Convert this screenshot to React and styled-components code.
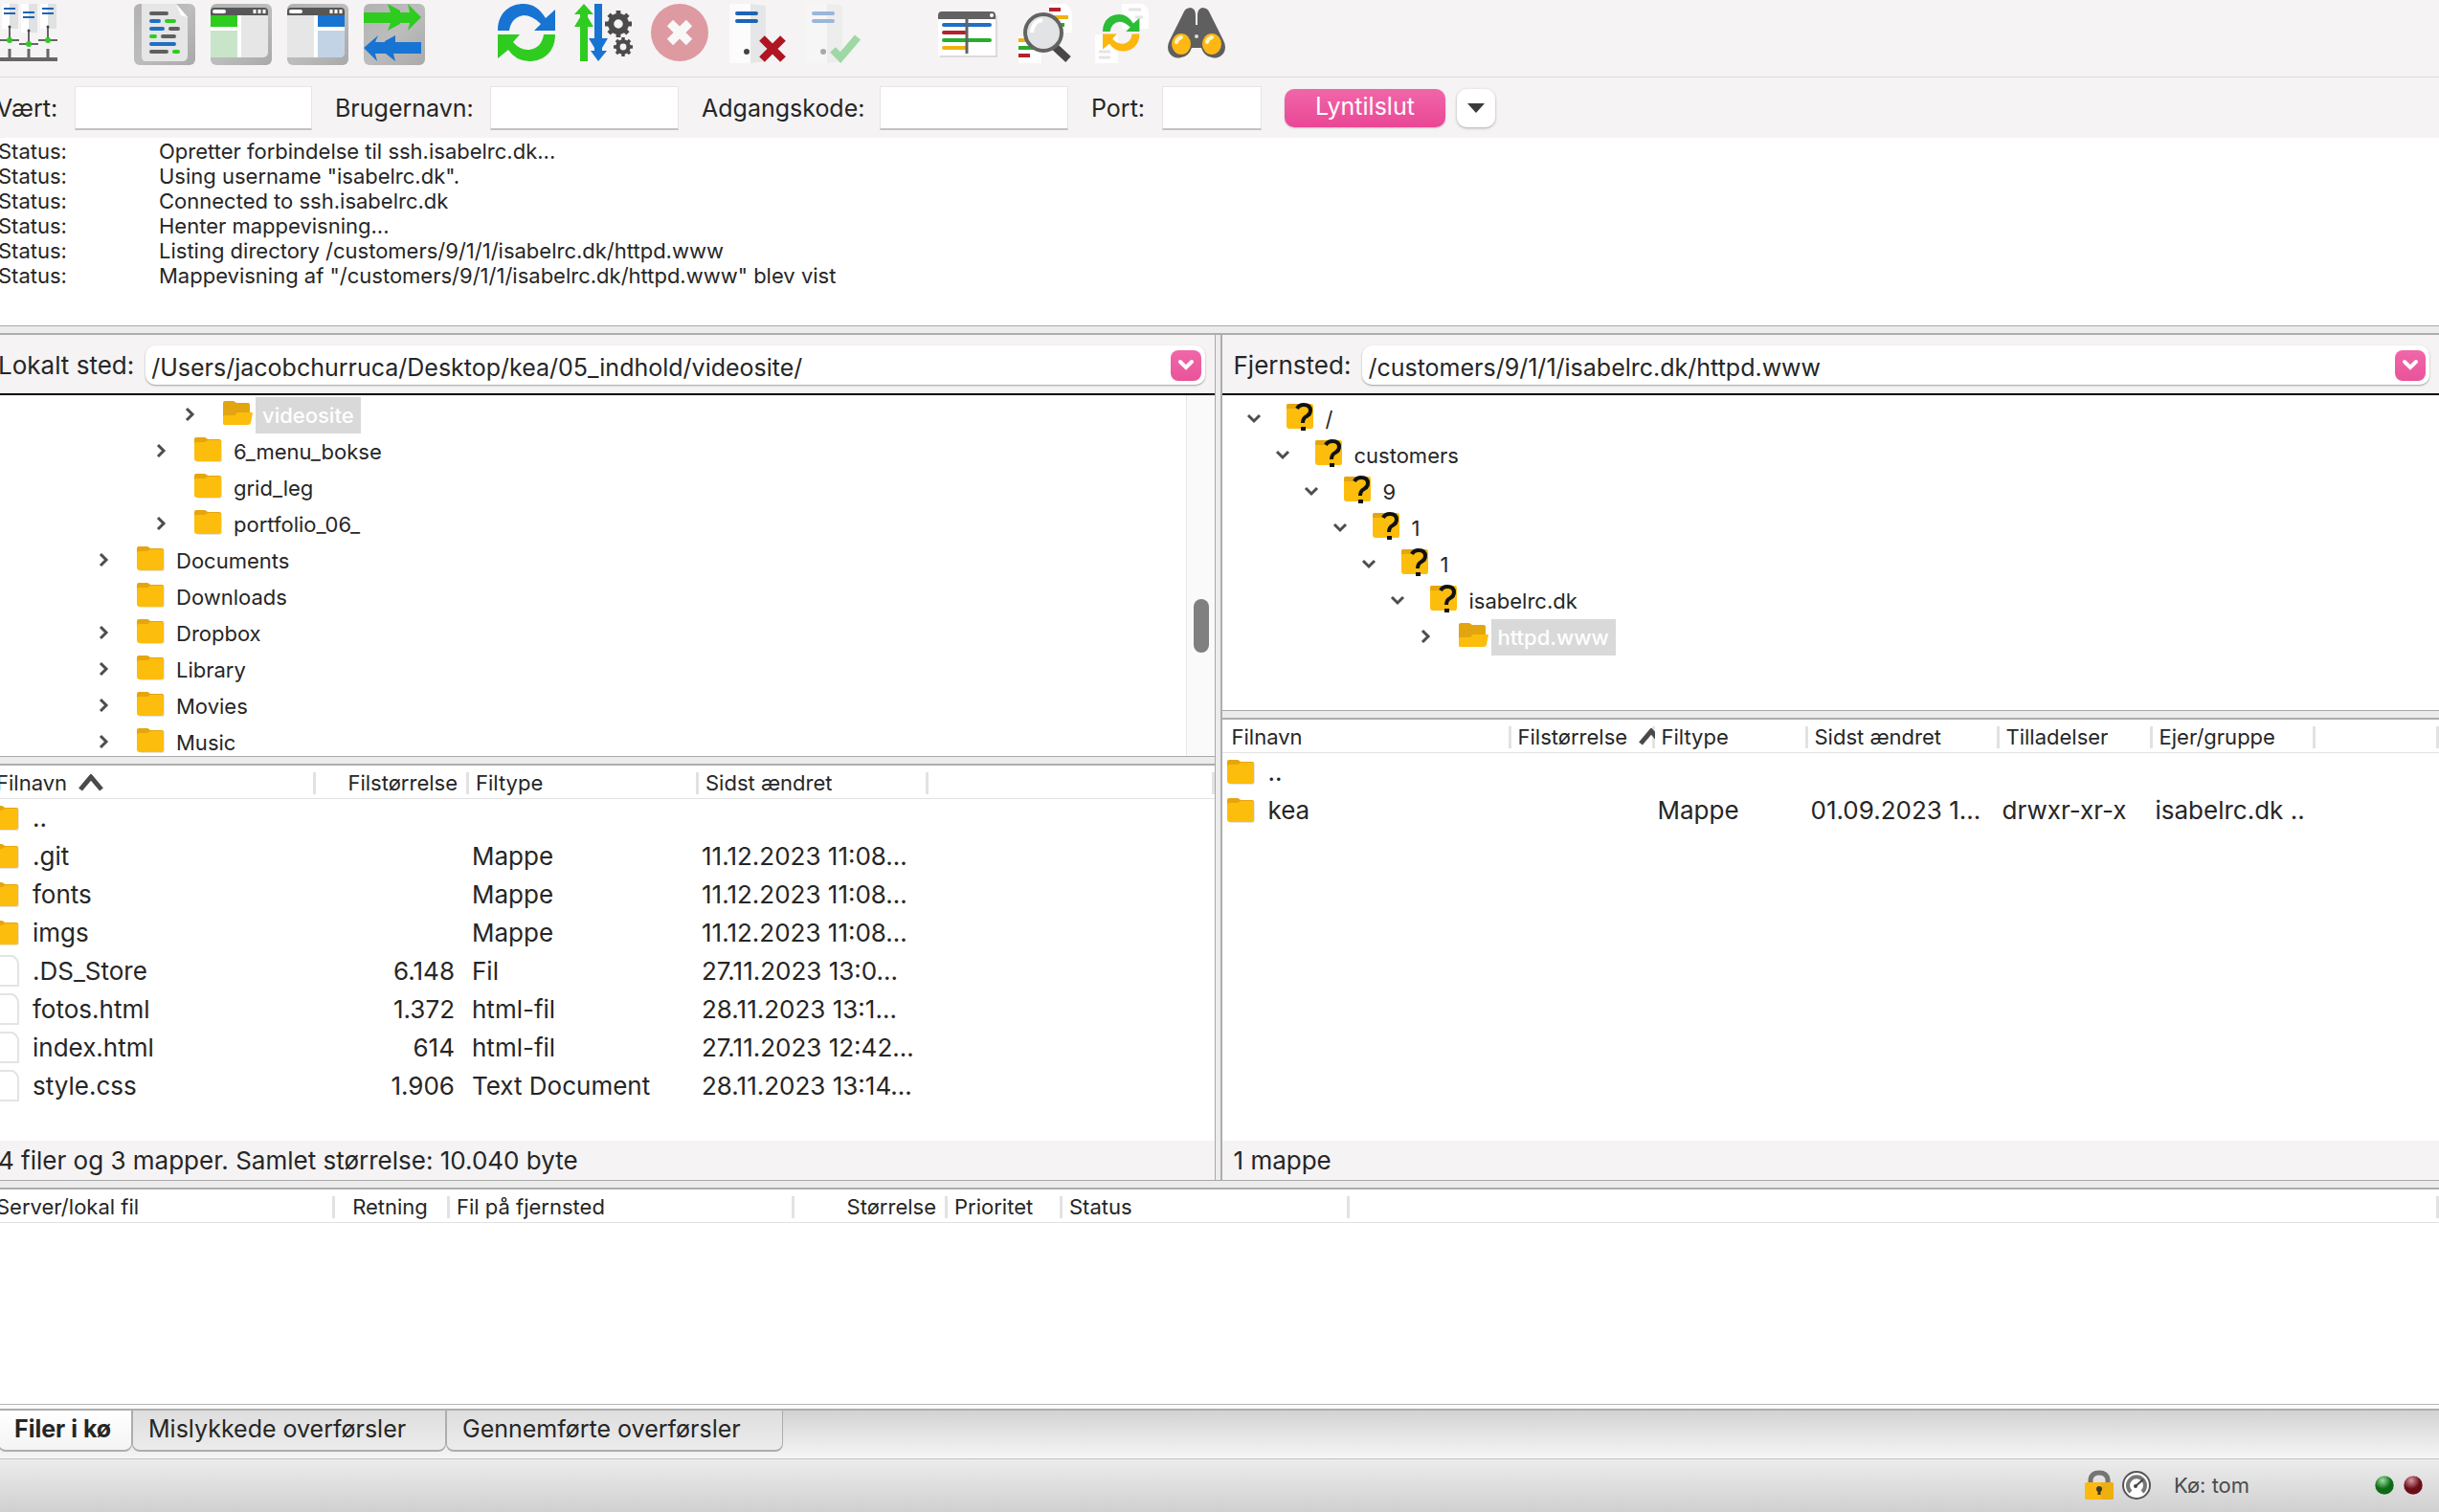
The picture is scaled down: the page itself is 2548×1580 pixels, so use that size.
import React from "react";
import styled, { createGlobalStyle, css } from "styled-components";

const GlobalStyle = createGlobalStyle`
  *, *::before, *::after { box-sizing: border-box; }
  html, body { margin: 0; padding: 0; background: #f5f3f4; }
  body {
    overflow-x: hidden;
    font-family: Inter, "Liberation Sans", sans-serif;
    font-size: 26px;
    line-height: 40px;
    color: #262626;
  }
  button, input { font: inherit; color: inherit; margin: 0; }
  svg { display: block; }
`;

/* ---------- shell ---------- */

const Shell = styled.main`
  display: flex;
  flex-direction: column;
  min-height: 100vh;
  margin-left: -14px;
`;

const Toolbar = styled.div`
  display: flex;
  gap: 76px;
  padding: 4px 14px 12px;
  border-bottom: 1px solid #dddbdc;
`;

const ToolGroup = styled.div`
  display: flex;
  gap: 16px;
`;

const ToolButton = styled.button`
  width: 64px;
  height: 64px;
  padding: 0;
  border: 0;
  border-radius: 6px;
  background: ${(p) => (p.$pressed ? "linear-gradient(135deg, #b2b2b2, #bdbdbd 50%, #a9a9a9)" : "transparent")};
  opacity: ${(p) => (p.$dim ? 0.42 : 1)};
`;

const ConnectBar = styled.form`
  display: flex;
  align-items: center;
  height: 63px;
  padding-left: 10px;
  font-size: 25px;
`;

const Field = styled.label`
  display: flex;
  align-items: center;
  justify-content: space-between;
  width: ${(p) => p.$w}px;
  margin-right: 24px;
  white-space: nowrap;
`;

const TextBox = styled.input`
  width: ${(p) => p.$w}px;
  height: 46px;
  padding: 0 8px;
  border: 1px solid #e6e4e5;
  border-bottom: 2px solid #c4c2c3;
  background: #fff;
  outline: 0;
`;

const ConnectButton = styled.button`
  width: 168px;
  height: 40px;
  padding: 0 0 4px;
  border: 0;
  border-radius: 10px;
  line-height: 36px;
  color: #fff;
  background: linear-gradient(#f067a8, #ea4696);
  box-shadow: 0 1px 2px rgba(0, 0, 0, 0.2);
`;

const HistoryButton = styled.button`
  display: grid;
  place-items: center;
  width: 40px;
  height: 40px;
  margin-left: 12px;
  padding: 0;
  border: 0;
  border-radius: 10px;
  background: #fff;
  box-shadow: 0 1px 3px rgba(0, 0, 0, 0.3);
`;

const Log = styled.div`
  height: 196px;
  padding: 1px 0 0 12px;
  background: #fff;
  font-size: 22px;
  line-height: 26px;
`;

const LogRow = styled.div`
  display: grid;
  grid-template-columns: 168px minmax(0, 1fr);
`;

const Splitter = styled.div`
  height: 10px;
  flex: none;
  border-top: 1px solid #a9a9a9;
  border-bottom: 2px solid #adadad;
  background: #ececec;
`;

const Panes = styled.div`
  display: grid;
  grid-template-columns: minmax(0, 1282fr) 8px minmax(0, 1271fr);
`;

const PaneSplitter = styled.div`
  border-left: 1px solid #a9a9a9;
  border-right: 2px solid #adadad;
  background: #ececec;
`;

const Pane = styled.section`
  display: flex;
  flex-direction: column;
  height: 883px;
`;

const PathBar = styled.div`
  display: flex;
  align-items: center;
  gap: 12px;
  height: 63px;
  flex: none;
  padding: 2px 10px 0 12px;
  border-bottom: 2px solid #000;
  white-space: nowrap;
`;

const PathBox = styled.div`
  display: flex;
  align-items: center;
  flex: 1;
  height: 41px;
  padding: 0 4px 0 6px;
  border-radius: 10px;
  background: #fff;
  box-shadow: 0 1px 2px rgba(0, 0, 0, 0.35);
  font-size: 25px;
`;

const PathInput = styled.input`
  flex: 1;
  min-width: 0;
  height: 40px;
  padding: 4px 0 0;
  border: 0;
  outline: 0;
  background: transparent;
`;

const PathButton = styled.button`
  display: grid;
  place-items: center;
  width: 32px;
  height: 32px;
  padding: 0;
  border: 0;
  border-radius: 8px;
  background: linear-gradient(#f067a8, #e9539a);
`;

/* ---------- trees ---------- */

const TreeArea = styled.div`
  display: flex;
  height: ${(p) => p.$h}px;
  flex: none;
  background: #fff;
  overflow: hidden;
`;

const TreeList = styled.ul`
  flex: 1;
  margin: 0;
  padding: ${(p) => p.$top}px 0 0;
  list-style: none;
  font-size: 22px;
  line-height: 38px;
`;

const TreeRow = styled.li`
  display: flex;
  align-items: center;
  height: 38px;
  padding-left: ${(p) => 23 + p.$level * 30}px;
`;

const Chevron = styled.span`
  width: 44px;
  flex: none;
  padding: 0 0 3px;
`;

const FolderSlot = styled.span`
  width: 30px;
  flex: none;
  padding-bottom: 4px;
`;

const TreeLabel = styled.span`
  margin-left: 4px;
  padding: 0 7px;
  ${(p) =>
    p.$selected &&
    css`
      background: #d9d9d9;
      color: #fff;
      font-weight: 500;
    `}
`;

const ScrollTrack = styled.div`
  width: 30px;
  padding: 213px 6px 0 7px;
  border-left: 1px solid #e6e6e6;
  background: #fafafa;
`;

const ScrollThumb = styled.div`
  height: 56px;
  border-radius: 8px;
  background: #808080;
`;

/* ---------- lists ---------- */

const ListArea = styled.div`
  flex: 1;
  min-height: 0;
  background: #fff;
`;

const Table = styled.table`
  width: 100%;
  table-layout: fixed;
  border-collapse: separate;
  border-spacing: 0;
`;

const Th = styled.th`
  height: 35px;
  padding: 2px 12px 0 ${(p) => (p.$first ? 10 : 7)}px;
  border-bottom: 1px solid #e2e2e2;
  background: linear-gradient(#e2e2e2, #e2e2e2) no-repeat right 7px / 3px 23px;
  font-size: 22px;
  font-weight: 400;
  line-height: 30px;
  text-align: ${(p) => p.$align || "left"};
  white-space: nowrap;
  overflow: hidden;
`;

const HeadLabel = styled.span`
  display: inline-flex;
  align-items: center;
  gap: 12px;
`;

const Td = styled.td`
  height: 40px;
  padding: 0 ${(p) => (p.$align === "right" ? 15 : 0)}px 0 ${(p) => (p.$first ? 5 : 3)}px;
  text-align: ${(p) => p.$align || "left"};
  white-space: nowrap;
  overflow: hidden;
`;

const NameCell = styled.span`
  display: flex;
  align-items: center;
  gap: 13px;
`;

const PaneStatus = styled.div`
  height: 41px;
  flex: none;
  padding: 1px 0 0 12px;
`;

const Queue = styled.section`
  flex: 1;
  background: #fff;
`;

const TabEdge = styled.div`
  height: 7px;
  border-top: 1px solid #b4b4b4;
  border-bottom: 2px solid #adadad;
  background: #fafafa;
`;

const TabBar = styled.div`
  display: flex;
  height: 51px;
  padding: 0 12px 7px;
  background: linear-gradient(#d2d2d2, #f6f6f6);
  border-bottom: 1px solid #c2c2c2;
`;

const Tab = styled.button`
  width: ${(p) => p.$w}px;
  padding: 0 0 4px 16px;
  border: 1px solid #adadad;
  border-top: 0;
  border-bottom-width: 2px;
  border-radius: 0 0 8px 8px;
  text-align: left;
  font-size: 25px;
  line-height: 36px;
  font-weight: ${(p) => (p.$active ? 700 : 400)};
  background: ${(p) => (p.$active ? "linear-gradient(#fff, #f4f4f4)" : "linear-gradient(#dedede, #ececec)")};
`;

const StatusBar = styled.footer`
  display: flex;
  align-items: center;
  justify-content: flex-end;
  gap: 8px;
  height: 55px;
  padding: 0 16px 2px 0;
  background: linear-gradient(#ececec, #d0d0d0);
`;

const QueueState = styled.span`
  width: 217px;
  padding-left: 16px;
  font-size: 22px;
  color: #4c4c4c;
`;

/* ---------- small drawings ---------- */

const Folder = () => (
  <svg width="30" height="28" viewBox="0 0 30 28" aria-hidden="true">
    <path d="M2 4Q2 1 5 1H12L15 3.500H27Q29 3.500 29 6V24Q29 27 26 27H5Q2 27 2 24Z" fill="#000" opacity=".1" />
    <path d="M0 3Q0 1 2 1H11L14 3H26Q28 3 28 5V12H0Z" fill="#e5a50d" />
    <path d="M0 8Q0 6 2 6H11L14 4H26Q28 4 28 6V24Q28 26 26 26H3Q0 26 0 23Z" fill="#fdbd0c" />
  </svg>
);

const FolderOpen = () => (
  <svg width="32" height="28" viewBox="0 0 32 28" aria-hidden="true">
    <path d="M0 3Q0 1 2 1H11L14 3H26Q28 3 28 5V22H0Z" fill="#e3a50f" />
    <path d="M0 25V17Q0 16 2 16H12L15 13H31L29 24Q28 26 26 26H1Z" fill="#fdbd0c" />
  </svg>
);

const FolderUnknown = () => (
  <svg width="30" height="30" viewBox="0 0 30 30" aria-hidden="true">
    <path d="M0 3Q0 1 2 1H26Q28 1 28 4V24Q28 27 26 27H3Q0 27 0 24Z" fill="#fdbd0c" />
    <path d="M0 3Q0 1 2 1H12L9 6H0Z" fill="#e5a50d" />
    <path d="M11 6Q13 2 18 2Q25 2 25 8Q25 12 21 14Q17 16 17 21" fill="none" stroke="#111" strokeWidth="4" />
    <rect x="15" y="25" width="5" height="4" fill="#111" />
  </svg>
);

const FileIcon = () => (
  <svg width="30" height="34" viewBox="0 0 30 34" aria-hidden="true">
    <path d="M1 1H22Q28 4 28 10V32H1Z" fill="#fff" stroke="#e2e5e2" strokeWidth="2" />
  </svg>
);

const ChevronMark = ({ open }) => (
  <svg width="20" height="20" viewBox="0 0 20 20" aria-hidden="true">
    <path d={open ? "M4 7L10 13L16 7" : "M6 4L12 10L6 16"} fill="none" stroke="#4d4d4d" strokeWidth="3" />
  </svg>
);

const SortMark = () => (
  <svg width="26" height="18" viewBox="0 0 26 18" aria-hidden="true">
    <path d="M2 16L13 3L24 16" fill="none" stroke="#4a4a4a" strokeWidth="5" />
  </svg>
);

const WhiteChevron = () => (
  <svg width="18" height="14" viewBox="0 0 18 14" aria-hidden="true">
    <path d="M3 3L9 9L15 3" fill="none" stroke="#fff" strokeWidth="4" strokeLinecap="round" />
  </svg>
);

/* ---------- toolbar drawings, each on a 64 x 64 grid ---------- */

const Icon = ({ children }) => (
  <svg width="64" height="64" viewBox="0 0 64 64" aria-hidden="true">
    {children}
  </svg>
);

const GREEN = "#2ecc1f";
const BLUE = "#1874d2";

const Server = ({ x, y, h = 30 }) => (
  <g>
    <path d={`M${x - 8} ${y}h8v${h}h-8z`} fill="#fff" />
    <path d={`M${x} ${y}h9v${h}h-9z`} fill="#dfe1e2" />
    <path d={`M${x - 6} ${y + 9}h12M${x - 6} ${y + 14}h12`} stroke="#1f63b5" strokeWidth="2" />
    <path d={`M${x} ${y + 28}v12M${x - 10} ${y + 42}h20`} stroke="#666" strokeWidth="2" />
    <circle cx={x} cy={y + 28} r="1.500" fill="#444" />
    <circle cx={x} cy={y + 42} r="3" fill={GREEN} />
  </g>
);

const SiteManagerIcon = () => (
  <Icon>
    <Server x={10} y={-4} />
    <Server x={50} y={-4} />
    <Server x={30} y={0} />
    <path d="M10 47v12M30 47v12M50 47v12" stroke="#666" strokeWidth="3" />
    <path d="M0 58H60" stroke="#666" strokeWidth="4" />
  </Icon>
);

const LogIcon = () => (
  <Icon>
    <path d="M8 0H44L56 14V54Q56 60 50 60H12Q8 60 8 54Z" fill="#e6e6e6" />
    <path d="M44 0L56 14L49 12Z" fill="#fff" />
    <g strokeWidth="4" strokeLinecap="round">
      <path d="M18 10H34M38 26H46M30 34H42M18 50H34" stroke="#5f5f5f" />
      <path d="M18 18H26M18 26H30M18 42H42" stroke="#1f6fc4" />
      <path d="M34 18H42M18 34H22M42 50H46" stroke={GREEN} />
    </g>
  </Icon>
);

const WindowFrame = ({ children }) => (
  <Icon>
    <path d="M0 12H60V50Q60 56 54 56H0Z" fill="#e6e6e6" />
    {children}
    <path d="M0 8Q0 4 4 4H56Q60 4 60 8V12H0Z" fill="#575757" />
    <rect x="2" y="6" width="14" height="4" rx="2" fill="#fff" />
    <path d="M46 6v4M51 6v4M56 6v4" stroke="#fff" strokeWidth="3" />
  </Icon>
);

const LocalTreeIcon = () => (
  <WindowFrame>
    <path d="M0 28H28V56H0Z" fill="#c8e4c9" />
    <path d="M0 24H28V12H32V56H28V28H0Z" fill="#fff" />
    <path d="M0 12H28V24H0Z" fill={GREEN} />
  </WindowFrame>
);

const RemoteTreeIcon = () => (
  <WindowFrame>
    <path d="M32 28H60V50Q60 56 54 56H32Z" fill="#c2d3e5" />
    <path d="M28 12H32V24H60V28H32V56H28Z" fill="#fff" />
    <path d="M32 12H60V24H32Z" fill={BLUE} />
  </WindowFrame>
);

const QueueIcon = () => (
  <Icon>
    <path d="M0 9H28L25 0L38 7V9H48L46 0L60 14L46 28L48 20H38V21L25 28L28 20H0Z" fill={GREEN} />
    <path d="M60 40H33V33L22 39V40H12L15 33L0 46L14 60L12 52H23L33 60L31 52H60Z" fill={BLUE} />
  </Icon>
);

const RefreshArrows = ({ top = BLUE, bottom = GREEN }) => (
  <g>
    <path d="M0 28C0 8 14 0 27 0Q41 0 50 15L60 6V28H38L45 21Q36 12 27 12Q14 14 12 28Z" fill={top} />
    <path d="M60 32C60 52 46 60 33 60Q19 60 11 48L0 57V32H23L16 40Q24 49 33 48Q46 46 48 32Z" fill={bottom} />
  </g>
);

const RefreshIcon = () => (
  <Icon>
    <RefreshArrows />
  </Icon>
);

const Gear = ({ cx, cy, r }) => (
  <g fill="none" stroke="#4b4b4b">
    <circle cx={cx} cy={cy} r={r * 0.56} strokeWidth={r * 0.44} />
    {[0, 45, 90, 135].map((a) => (
      <path
        key={a}
        d={`M${cx - r} ${cy}h${r * 0.4}M${cx + r * 0.6} ${cy}h${r * 0.4}`}
        strokeWidth={r * 0.34}
        transform={`rotate(${a} ${cx} ${cy})`}
      />
    ))}
  </g>
);

const ProcessIcon = () => (
  <Icon>
    <path d="M6 60V24H0L6 14V11H0L10 0L20 11H14V14L20 24H14V60Z" fill={GREEN} />
    <path d="M21 0H29V36H35L29 46V49H34L25 60L17 49H21V46L15 36H21Z" fill={BLUE} />
    <Gear cx={46} cy={21} r={14} />
    <Gear cx={51} cy={45} r={10} />
  </Icon>
);

const CancelIcon = () => (
  <Icon>
    <circle cx="30" cy="30" r="30" fill="#bd2230" />
    <path d="M20 20L40 40M40 20L20 40" stroke="#fff" strokeWidth="9" />
  </Icon>
);

const ServerBody = () => (
  <g>
    <path d="M2 0H24V62H2Z" fill="#fcfcfc" />
    <path d="M24 0L40 2V60L24 62Z" fill="#e4e6e7" />
    <path d="M10 10H30M10 18H30" stroke="#1f63b5" strokeWidth="4" strokeLinecap="round" />
    <circle cx="20" cy="50" r="3" fill="#444" />
  </g>
);

const DisconnectIcon = () => (
  <Icon>
    <ServerBody />
    <path d="M36 36L58 58M58 36L36 58" stroke="#b01522" strokeWidth="8" />
  </Icon>
);

const ReconnectIcon = () => (
  <Icon>
    <ServerBody />
    <path d="M30 48L38 56L56 35" fill="none" stroke="#28b53a" strokeWidth="8" />
  </Icon>
);

const CompareIcon = () => (
  <Icon>
    <path d="M2 12H62V56H2Z" fill="#000" opacity=".1" />
    <path d="M0 14H60V54H0Z" fill="#fff" />
    <path d="M0 16V12Q0 8 4 8H56Q60 8 60 12V16Z" fill="#626262" />
    <circle cx="56" cy="12" r="2" fill="#fff" />
    <g strokeWidth="4" strokeLinecap="round">
      <path d="M6 22H54" stroke="#1f6fc4" />
      <path d="M6 30H28" stroke="#b5202f" />
      <path d="M6 38H54" stroke="#27ad2c" />
      <path d="M6 46H28" stroke="#efb310" />
    </g>
    <path d="M30 16V52" stroke="#626262" strokeWidth="3" />
  </Icon>
);

const FindIcon = () => (
  <Icon>
    <path d="M36 0H54L60 8V30H36Z M4 34H28V62H4Z" fill="#fff" />
    <g strokeWidth="4">
      <path d="M36 6H48M4 54H16" stroke="#b5202f" />
      <path d="M40 14H56M4 38H16" stroke="#efb310" />
      <path d="M40 22H52M4 46H20" stroke="#27ad2c" />
    </g>
    <path d="M41 44L56 58" stroke="#474747" strokeWidth="8" />
    <circle cx="30" cy="30" r="19" fill="#e2e3e4" stroke="#636363" strokeWidth="4" />
    <path d="M18 30Q19 18 29 17" stroke="#fff" strokeWidth="4" fill="none" />
  </Icon>
);

const SyncIcon = () => (
  <Icon>
    <path d="M32 0H54L60 6V26H32Z M4 32H28V62H4Z" fill="#fff" />
    <path d="M39 6H52M46 14H54M8 50H20M8 56H20" stroke="#e4e4e4" strokeWidth="3" />
    <g transform="translate(12 11) scale(.64)">
      <RefreshArrows top="#2bbd35" bottom="#fdb60d" />
    </g>
  </Icon>
);

const BinocularsIcon = () => (
  <Icon>
    <path d="M16 10Q18 4 24 4Q29 5 29 12V22H31V12Q31 5 36 4Q42 4 44 10L58 38Q62 46 58 52Q53 58 46 56Q38 55 35 46H25Q22 55 14 56Q7 58 2 52Q-2 46 2 38Z" fill="#5f5f5f" />
    <ellipse cx="14" cy="42" rx="10" ry="11" fill="#fdb813" />
    <ellipse cx="46" cy="42" rx="10" ry="11" fill="#fdb813" />
    <path d="M9 40Q10 36 14 35M41 40Q42 36 46 35" stroke="#fff3c8" strokeWidth="4" fill="none" strokeLinecap="round" />
    <circle cx="30" cy="34" r="2" fill="#ddd" />
  </Icon>
);

const LockIcon = () => (
  <svg width="32" height="32" viewBox="0 0 32 32" role="img" aria-label="Krypteret">
    <path d="M7 14V10Q8 3 16 3Q24 3 25 10V14" fill="none" stroke="#747474" strokeWidth="5" />
    <rect x="1" y="13" width="30" height="18" rx="2" fill="#fdb90f" />
    <path d="M18 13H29Q31 13 31 15V29Q31 31 29 31H18Z" fill="#eeb010" />
    <circle cx="16" cy="20" r="3" fill="#3f3a2c" />
    <path d="M16 20V26" stroke="#3f3a2c" strokeWidth="3" />
  </svg>
);

const GaugeIcon = () => (
  <svg width="30" height="32" viewBox="0 0 30 32" role="img" aria-label="Hastighed">
    <circle cx="15" cy="16" r="14" fill="#fff" stroke="#555" strokeWidth="2" />
    <path d="M9 23A9 9 0 1 1 21 23" fill="none" stroke="#777" strokeWidth="4" />
    <path d="M14 17L22 10" stroke="#444" strokeWidth="2" />
    <circle cx="14" cy="17" r="2" fill="#444" />
  </svg>
);

const Lamp = ({ id, light, dark, label }) => (
  <svg width="22" height="22" viewBox="0 0 22 22" role="img" aria-label={label}>
    <defs>
      <radialGradient id={id} cx="40%" cy="25%" r="75%">
        <stop offset="0" stopColor={light} />
        <stop offset=".6" stopColor={dark} />
        <stop offset="1" stopColor={dark} />
      </radialGradient>
    </defs>
    <circle cx="11" cy="11" r="10" fill={`url(#${id})`} stroke="#fff" strokeOpacity=".4" />
  </svg>
);

/* ---------- data ---------- */

const toolGroups = [
  [{ name: "Stedstyring", icon: <SiteManagerIcon /> }],
  [
    { name: "Meddelelseslog", icon: <LogIcon />, pressed: true },
    { name: "Lokalt mappetræ", icon: <LocalTreeIcon />, pressed: true },
    { name: "Mappetræ på fjernsted", icon: <RemoteTreeIcon />, pressed: true },
    { name: "Overførselskø", icon: <QueueIcon />, pressed: true },
  ],
  [
    { name: "Opdater", icon: <RefreshIcon /> },
    { name: "Behandl kø", icon: <ProcessIcon /> },
    { name: "Annuller", icon: <CancelIcon />, dim: true },
    { name: "Afbryd", icon: <DisconnectIcon /> },
    { name: "Genopret", icon: <ReconnectIcon />, dim: true },
  ],
  [
    { name: "Sammenlign mapper", icon: <CompareIcon /> },
    { name: "Filtre", icon: <FindIcon /> },
    { name: "Synkroniseret gennemsyn", icon: <SyncIcon /> },
    { name: "Søg", icon: <BinocularsIcon /> },
  ],
];

const logLines = [
  "Opretter forbindelse til ssh.isabelrc.dk...",
  'Using username "isabelrc.dk".',
  "Connected to ssh.isabelrc.dk",
  "Henter mappevisning...",
  "Listing directory /customers/9/1/1/isabelrc.dk/httpd.www",
  'Mappevisning af "/customers/9/1/1/isabelrc.dk/httpd.www" blev vist',
];

const localTree = [
  { level: 6, name: "videosite", mark: "closed", kind: "open", selected: true },
  { level: 5, name: "6_menu_bokse", mark: "closed" },
  { level: 5, name: "grid_leg" },
  { level: 5, name: "portfolio_06_", mark: "closed" },
  { level: 3, name: "Documents", mark: "closed" },
  { level: 3, name: "Downloads" },
  { level: 3, name: "Dropbox", mark: "closed" },
  { level: 3, name: "Library", mark: "closed" },
  { level: 3, name: "Movies", mark: "closed" },
  { level: 3, name: "Music", mark: "closed" },
];

const remoteTree = [
  { level: 0, name: "/", mark: "open", kind: "unknown" },
  { level: 1, name: "customers", mark: "open", kind: "unknown" },
  { level: 2, name: "9", mark: "open", kind: "unknown" },
  { level: 3, name: "1", mark: "open", kind: "unknown" },
  { level: 4, name: "1", mark: "open", kind: "unknown" },
  { level: 5, name: "isabelrc.dk", mark: "open", kind: "unknown" },
  { level: 6, name: "httpd.www", mark: "closed", kind: "open", selected: true },
];

const localColumns = [
  { label: "Filnavn", w: 344, sorted: true },
  { label: "Filstørrelse", w: 160, align: "right" },
  { label: "Filtype", w: 240 },
  { label: "Sidst ændret", w: 240 },
  { label: "" },
];

const localFiles = [
  ["..", "", "", ""],
  [".git", "", "Mappe", "11.12.2023 11:08…"],
  ["fonts", "", "Mappe", "11.12.2023 11:08…"],
  ["imgs", "", "Mappe", "11.12.2023 11:08…"],
  [".DS_Store", "6.148", "Fil", "27.11.2023 13:0…"],
  ["fotos.html", "1.372", "html-fil", "28.11.2023 13:1…"],
  ["index.html", "614", "html-fil", "27.11.2023 12:42…"],
  ["style.css", "1.906", "Text Document", "28.11.2023 13:14…"],
];

const remoteColumns = [
  { label: "Filnavn", w: 302 },
  { label: "Filstørrelse", w: 150, sorted: true },
  { label: "Filtype", w: 160 },
  { label: "Sidst ændret", w: 200 },
  { label: "Tilladelser", w: 160 },
  { label: "Ejer/gruppe", w: 170 },
  { label: "" },
];

const remoteFiles = [
  ["..", "", "", "", "", ""],
  ["kea", "", "Mappe", "01.09.2023 1…", "drwxr-xr-x", "isabelrc.dk .."],
];

const queueColumns = [
  { label: "Server/lokal fil", w: 364 },
  { label: "Retning", w: 120, align: "center" },
  { label: "Fil på fjernsted", w: 360 },
  { label: "Størrelse", w: 160, align: "right" },
  { label: "Prioritet", w: 120 },
  { label: "Status", w: 300 },
  { label: "" },
];

/* ---------- parts ---------- */

const folderKinds = { open: FolderOpen, unknown: FolderUnknown, closed: Folder };

function Tree({ rows, top }) {
  return (
    <TreeList $top={top}>
      {rows.map((row, i) => {
        const Mark = folderKinds[row.kind || "closed"];
        return (
          <TreeRow key={i} $level={row.level}>
            <Chevron>{row.mark && <ChevronMark open={row.mark === "open"} />}</Chevron>
            <FolderSlot>
              <Mark />
            </FolderSlot>
            <TreeLabel $selected={row.selected}>{row.name}</TreeLabel>
          </TreeRow>
        );
      })}
    </TreeList>
  );
}

function FileTable({ columns, rows = [], label }) {
  return (
    <Table aria-label={label}>
      <colgroup>
        {columns.map((c, i) => (
          <col key={i} width={c.w} />
        ))}
      </colgroup>
      <thead>
        <tr>
          {columns.map((c, i) => (
            <Th key={i} scope="col" $first={i === 0} $align={c.align}>
              <HeadLabel>
                {c.label}
                {c.sorted && <SortMark />}
              </HeadLabel>
            </Th>
          ))}
        </tr>
      </thead>
      <tbody>
        {rows.map((row) => (
          <tr key={row[0]}>
            {row.map((cell, i) => (
              <Td key={i} $first={i === 0} $align={columns[i].align}>
                {i === 0 ? (
                  <NameCell>
                    {row[1] ? <FileIcon /> : <Folder />}
                    {cell}
                  </NameCell>
                ) : (
                  cell
                )}
              </Td>
            ))}
          </tr>
        ))}
      </tbody>
    </Table>
  );
}

function PathPicker({ id, label, value }) {
  return (
    <PathBar>
      <label htmlFor={id}>{label}</label>
      <PathBox>
        <PathInput id={id} type="text" defaultValue={value} />
        <PathButton type="button" aria-label={`Vis stier for ${label}`}>
          <WhiteChevron />
        </PathButton>
      </PathBox>
    </PathBar>
  );
}

export default function App() {
  return (
    <>
      <GlobalStyle />
      <Shell>
        <Toolbar role="toolbar">
          {toolGroups.map((group, g) => (
            <ToolGroup key={g}>
              {group.map((t) => (
                <ToolButton key={t.name} type="button" aria-label={t.name} $pressed={t.pressed} $dim={t.dim}>
                  {t.icon}
                </ToolButton>
              ))}
            </ToolGroup>
          ))}
        </Toolbar>

        <ConnectBar onSubmit={(e) => e.preventDefault()}>
          <Field $w={330}>
            Vært:
            <TextBox type="text" $w={248} />
          </Field>
          <Field $w={359}>
            Brugernavn:
            <TextBox type="text" $w={197} />
          </Field>
          <Field $w={383}>
            Adgangskode:
            <TextBox type="password" $w={197} />
          </Field>
          <Field $w={178}>
            Port:
            <TextBox type="text" $w={104} />
          </Field>
          <ConnectButton type="submit">Lyntilslut</ConnectButton>
          <HistoryButton type="button" aria-label="Tidligere forbindelser">
            <svg width="18" height="10" viewBox="0 0 18 10" aria-hidden="true">
              <path d="M0 0H18L9 10Z" fill="#3a3a3a" />
            </svg>
          </HistoryButton>
        </ConnectBar>

        <Log role="log">
          {logLines.map((line) => (
            <LogRow key={line}>
              <span>Status:</span>
              <span>{line}</span>
            </LogRow>
          ))}
        </Log>
        <Splitter />

        <Panes>
          <Pane>
            <PathPicker id="local-path" label="Lokalt sted:" value="/Users/jacobchurruca/Desktop/kea/05_indhold/videosite/" />
            <TreeArea $h={377}>
              <Tree rows={localTree} top={2} />
              <ScrollTrack>
                <ScrollThumb />
              </ScrollTrack>
            </TreeArea>
            <Splitter />
            <ListArea>
              <FileTable label="Lokale filer" columns={localColumns} rows={localFiles} />
            </ListArea>
            <PaneStatus>4 filer og 3 mapper. Samlet størrelse: 10.040 byte</PaneStatus>
          </Pane>
          <PaneSplitter />
          <Pane>
            <PathPicker id="remote-path" label="Fjernsted:" value="/customers/9/1/1/isabelrc.dk/httpd.www" />
            <TreeArea $h={329}>
              <Tree rows={remoteTree} top={6} />
            </TreeArea>
            <Splitter />
            <ListArea>
              <FileTable label="Filer på fjernsted" columns={remoteColumns} rows={remoteFiles} />
            </ListArea>
            <PaneStatus>1 mappe</PaneStatus>
          </Pane>
        </Panes>
        <Splitter />

        <Queue>
          <FileTable label="Overførselskø" columns={queueColumns} />
        </Queue>
        <TabEdge />
        <TabBar role="tablist">
          <Tab type="button" role="tab" aria-selected="true" $active $w={140}>
            Filer i kø
          </Tab>
          <Tab type="button" role="tab" $w={328}>
            Mislykkede overførsler
          </Tab>
          <Tab type="button" role="tab" $w={352}>
            Gennemførte overførsler
          </Tab>
        </TabBar>
        <StatusBar>
          <LockIcon />
          <GaugeIcon />
          <QueueState>Kø: tom</QueueState>
          <Lamp id="lamp-green" light="#9fe0a0" dark="#0c6b14" label="Modtager" />
          <Lamp id="lamp-red" light="#d99aa2" dark="#6b0d18" label="Sender" />
        </StatusBar>
      </Shell>
    </>
  );
}
